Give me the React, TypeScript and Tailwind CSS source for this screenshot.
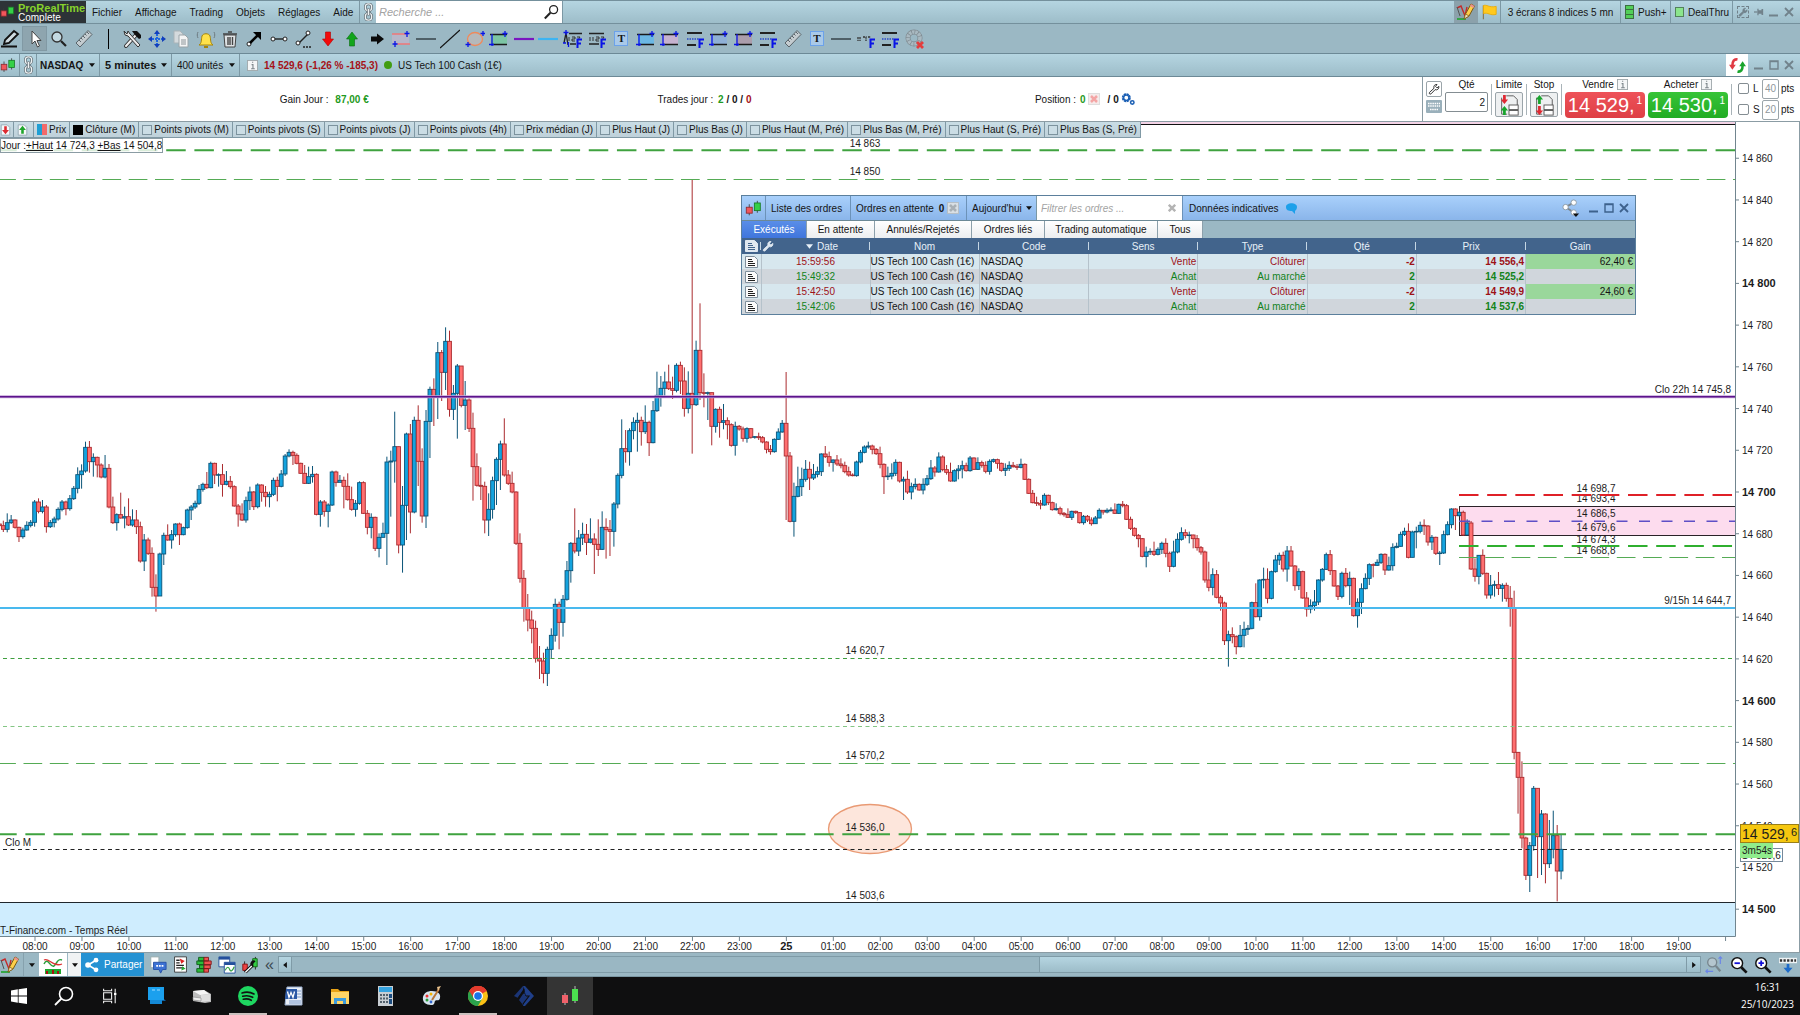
import type { ReactNode } from 'react'
import { useState } from 'react'
import clsx from 'clsx'

/* ---------- Data ---------- */

// 5 minute bars: close,high,low in thirds of a chart unit below the y=300 level
const BARS = `
677,665,690 688,662,696 668,640,697 660,645,672 682,658,686 710,680,726 690,683,716 676,664,692 667,660,682 606,600,680 634,595,640 621,600,640
680,615,698 668,660,684 657,650,682 628,622,662 606,600,634 626,602,646 596,585,632 565,558,600 524,502,580 513,493,566 442,425,518 485,423,518
472,460,530 495,470,532 531,490,535 505,465,535 621,492,625 668,590,672 644,640,692 654,578,656 650,620,685 675,595,678 660,628,680 680,630,702
783,665,788 720,702,813 760,713,765 862,742,890 888,823,935 762,758,888 706,698,795 720,673,722 704,690,746 672,670,710 704,668,735 683,680,706
630,626,686 621,615,660 610,602,627 568,555,615 553,548,575 563,516,567 490,485,565 525,488,552 524,520,560 553,492,590 544,513,556 560,528,566
618,556,620 642,612,680 660,610,663 602,590,668 576,560,630 620,573,630 555,550,625 577,553,605 590,558,620 583,575,622 541,533,588 559,530,604
522,510,562 468,462,528 457,448,472 466,452,495 490,460,493 520,488,522 550,495,552 530,500,552 523,498,548 643,520,646 606,600,680 634,600,650
615,610,682 516,512,618 547,512,560 541,525,545 559,530,625 599,520,602 628,560,632 610,600,650 548,544,614 640,544,642 682,630,703 652,640,715
745,650,753 712,700,772 700,668,705 486,470,795 483,452,650 440,335,548 735,440,760 616,558,818 402,398,720 636,372,700 361,350,640 484,316,558
648,445,668 364,330,684 268,260,474 290,235,378 158,126,357 217,150,303 124,82,270 328,92,350 280,255,360 198,192,416 316,198,322 300,243,390
385,295,396 500,338,602 556,460,560 559,502,600 660,545,700 628,580,708 542,530,656 478,472,615 432,422,570 525,355,530 550,510,555 576,515,580
730,574,735 835,700,848 925,810,965 960,882,994 985,932,1030 1075,962,1088 1083,1038,1137 1120,1058,1150 1048,1040,1158 1006,985,1075 913,896,1025 967,905,1048
898,885,1010 812,783,902 730,726,848 753,625,760 714,690,768 703,668,735 727,672,765 717,655,730 733,700,822 748,658,768 682,634,750 689,655,776
694,660,768 612,606,740 526,520,625 446,358,535 455,390,488 392,385,497 367,352,418 361,338,455 395,350,437 367,316,402 428,362,468 332,303,430
286,215,336 265,228,320 246,215,290 266,194,270 271,230,297 196,190,277 243,185,282 325,202,350 280,214,340 314,-361,461 151,122,318 278,10,300
280,220,322 278,275,360 379,278,436 328,325,398 367,320,413 362,312,388 374,352,418 436,370,440 379,365,467 387,375,392 415,380,425 386,382,428
412,384,416 410,408,416 413,398,420 426,408,430 448,424,460 455,435,464 418,415,458 396,385,420 370,360,398 468,216,660 664,456,667 589,548,710
560,500,592 538,503,588 508,480,545 534,485,570 523,492,540 515,500,532 462,460,528 470,438,474 487,455,500 480,478,515 492,465,498 497,475,505
515,485,520 525,500,530 527,520,529 486,482,530 457,450,490 441,436,460 438,425,446 448,434,463 461,444,465 493,440,505 530,490,582 528,500,540
520,490,538 487,478,528 543,485,548 538,530,600 576,512,582 560,548,598 553,535,568 570,550,572 553,535,583 536,525,558 504,480,540 516,498,530
471,457,518 509,466,514 517,495,524 543,488,545 512,508,545 507,495,538 497,482,535 512,488,515 474,468,515 508,472,510 488,472,510 496,482,503
514,484,520 484,478,524 479,476,488 490,476,506 511,488,515 505,490,528 496,484,513 500,486,503 502,492,510 493,476,505 538,490,540 580,535,582
608,570,610 610,590,618 615,600,628 586,580,617 608,584,615 629,605,632 626,610,632 640,620,646 644,636,650 652,625,654 634,632,660 638,632,642
668,636,671 649,645,674 660,645,666 671,652,677 654,648,672 631,625,655 636,630,644 631,625,640 630,622,635 640,610,642 613,611,642 617,603,622
658,612,660 685,650,690 706,682,710 716,702,742 769,714,772 756,740,802 754,745,765 763,725,768 748,742,766 730,725,762 760,715,772 799,755,816
756,722,802 718,700,760 698,682,722 706,688,715 705,695,730 716,704,745 743,705,752 756,738,764 840,752,848 862,785,874 824,805,886 892,810,895
909,886,932 1022,905,1035 1004,992,1100 1010,982,1030 1040,1006,1063 1006,975,1042 988,965,1042 985,975,1005 908,905,988 950,850,952 840,838,962 838,803,865
895,805,910 815,812,898 780,765,818 766,758,795 807,755,815 753,738,845 798,738,800 857,795,872 815,805,870 894,812,896 927,876,950 917,898,940
906,870,932 840,838,915 808,804,845 764,758,810 812,750,825 858,810,860 889,855,900 820,815,895 857,804,862 835,815,915 947,833,950 907,895,983
866,850,942 835,820,868 794,790,855 796,790,832 787,778,798 763,760,792 810,760,825 797,770,812 742,730,812 739,728,745 703,695,740 694,683,708
772,670,775 696,692,772 694,680,745 676,665,700 678,658,705 726,675,737 712,705,750 760,710,765 759,753,795 704,692,762 674,664,706 627,625,685
647,625,690 637,633,650 705,632,708 669,658,706 807,663,810 829,775,845 766,765,853 820,748,825 885,818,896 856,825,896 854,842,890 865,816,885
856,850,905 895,848,905 923,858,980 1357,872,1378 1432,1356,1541 1614,1384,1645 1726,1610,1740 1637,1626,1776 1465,1458,1652 1610,1465,1734 1542,1530,1725 1691,1540,1750
1648,1560,1704 1607,1532,1675 1713,1575,1804 1648,1605,1738
`
  .trim()
  .split(/\s+/)
  .map((bar) => bar.split(',').map(Number))

const BAR_STEP = 3.914
const barX = (i: number) => -0.6 + i * BAR_STEP
const levelY = (v: number) => 300 + v / 3
const priceY = (price: number) => 492 + (14700 - price) * 2.086

const PRICES = Array.from({ length: 19 }, (_, i) => 14860 - i * 20)
const HOURS = Array.from({ length: 37 }, (_, i) => i)

const INDICATORS = [
  'Points pivots (M)', 'Points pivots (S)', 'Points pivots (J)', 'Points pivots (4h)', 'Prix médian (J)',
  'Plus Haut (J)', 'Plus Bas (J)', 'Plus Haut (M, Pré)', 'Plus Bas (M, Pré)', 'Plus Haut (S, Pré)', 'Plus Bas (S, Pré)',
]

const ORDERS = [
  { date: '15:59:56', sens: 'Vente', type: 'Clôturer', qte: '-2', prix: '14 556,4', gain: '62,40 €' },
  { date: '15:49:32', sens: 'Achat', type: 'Au marché', qte: '2', prix: '14 525,2', gain: '' },
  { date: '15:42:50', sens: 'Vente', type: 'Clôturer', qte: '-2', prix: '14 549,9', gain: '24,60 €' },
  { date: '15:42:06', sens: 'Achat', type: 'Au marché', qte: '2', prix: '14 537,6', gain: '' },
]

const TABS = [
  { label: 'Exécutés', width: 'w-[65px]' },
  { label: 'En attente', width: 'w-[68px]' },
  { label: 'Annulés/Rejetés', width: 'w-[97px]' },
  { label: 'Ordres liés', width: 'w-[73px]' },
  { label: 'Trading automatique', width: 'w-[113px]' },
  { label: 'Tous', width: 'w-[45px]' },
]

/* ---------- Icons ---------- */

interface IconProps {
  children: ReactNode
  className?: string
  box?: string
}

function Icon({ children, className = 'h-5 w-5', box = '0 0 20 20' }: IconProps) {
  return (
    <svg viewBox={box} className={clsx('block shrink-0', className)} fill="none" aria-hidden="true">
      {children}
    </svg>
  )
}

const Caret = ({ className = '' }: { className?: string }) => (
  <Icon box="0 0 8 5" className={clsx('h-[4px] w-[6px]', className)}>
    <path d="M0 0h8L4 5z" fill="#111" />
  </Icon>
)

const Candles = ({ className = 'h-[18px] w-[18px]' }: { className?: string }) => (
  <Icon className={className}>
    <path d="M5 5v13M14.500 1v14" stroke="#3a3a3a" />
    <rect x="1.500" y="8.500" width="7" height="7" fill="#f0565c" stroke="#8f2a2e" />
    <rect x="11" y="3.500" width="7" height="9" fill="#35d048" stroke="#187a26" />
  </Icon>
)

const Chain = () => (
  <Icon box="0 0 10 20" className="h-[18px] w-[9px]">
    <rect x="1.500" y="1" width="7" height="7.500" rx="3.200" stroke="#59656b" strokeWidth="3" />
    <rect x="1.500" y="1" width="7" height="7.500" rx="3.200" stroke="#eef3f5" strokeWidth="1.500" />
    <rect x="1.500" y="11.500" width="7" height="7.500" rx="3.200" stroke="#59656b" strokeWidth="3" />
    <rect x="1.500" y="11.500" width="7" height="7.500" rx="3.200" stroke="#eef3f5" strokeWidth="1.500" />
    <rect x="3.700" y="6" width="2.600" height="8" rx="1.300" fill="#eef3f5" stroke="#59656b" strokeWidth=".8" />
  </Icon>
)

const Minimize = () => (
  <Icon box="0 0 10 10" className="h-[10px] w-[10px]"><path d="M0 8.500h9" stroke="currentColor" strokeWidth="2" /></Icon>
)
const Maximize = () => (
  <Icon box="0 0 10 10" className="h-[10px] w-[10px]"><path d="M1 1h8v8H1zM1 1.500h8" stroke="currentColor" strokeWidth="1.400" /></Icon>
)
const Close = () => (
  <Icon box="0 0 10 10" className="h-[10px] w-[10px]"><path d="M1 1l8 8M9 1L1 9" stroke="currentColor" strokeWidth="1.800" /></Icon>
)

const Wrench = ({ color = '#222', fill = '#fff', className = 'h-3 w-3' }) => (
  <Icon box="0 0 16 16" className={className}>
    <path d="M2 12.500L8 7C7 4 9 1.500 12 2L10 4.500l2 2L14.500 4.500C15 8 12 10 9.500 8.800L4 14.500C2.500 15.500 1 14 2 12.500z" fill={fill} stroke={color} strokeWidth="1.200" />
  </Icon>
)

const InfoBox = () => (
  <Icon box="0 0 12 12" className="h-[11px] w-[11px]">
    <rect x=".5" y=".5" width="11" height="11" fill="#f4f6f7" stroke="#a0a8ac" />
    <path d="M5 5h1.500v4M4.500 9.500h4M5.500 2.500h1.300" stroke="#7d868b" strokeWidth="1.200" />
  </Icon>
)

const PencilChart = () => (
  <Icon>
    <path d="M1 6l4-2 4 10 2-9" stroke="#c42a2a" strokeWidth="1.400" />
    <path d="M1 5l3 9" stroke="#555" />
    <path d="M1 17h9" stroke="#2aa53a" strokeWidth="1.800" />
    <path d="M8 17l1.500-5L15 2l3.500 2L13 14z" fill="#ffcf4a" stroke="#7a5a12" />
    <path d="M8 17l1.500-5 3.500 2z" fill="#f6dfb8" stroke="#7a5a12" strokeWidth=".7" />
    <path d="M14 4l3.500 2L18.500 4 15 2z" fill="#e98f8f" />
  </Icon>
)

const Ruler = () => (
  <Icon>
    <path d="M2 14L14 1.500l4 4L6 18z" fill="#c4ccd0" stroke="#59646a" />
    <path d="M5 11l2 2M7 9l1.500 1.500M9 7l2 2M11 5l1.500 1.500M13 3l2 2" stroke="#59646a" />
  </Icon>
)

const BlueF = () => <path d="M14.500 19v-8.500H19M14.500 14.500h3.500" stroke="#0a14e6" strokeWidth="2" />

const TextNote = () => (
  <span className="relative flex h-[15px] w-[14px] items-center justify-center border border-[#6ca2ea] bg-[#a9c9e8] font-['Liberation_Serif',serif] text-[11px] font-bold">
    T
  </span>
)

const ZoneIcon = ({ fill }: { fill: string }) => (
  <Icon>
    <path d="M2 5.500h16v10H2z" fill={fill} />
    <path d="M1 5.500h17M3 15.500h15" stroke="#1b1b1b" strokeWidth="1.500" />
    <path d="M3 5v12M0 15.500h5M16 2v6M13.500 4.500h5" stroke="#0a14e6" strokeWidth="1.300" />
  </Icon>
)

const LevelsIcon = () => (
  <Icon>
    <path d="M2 4h15M2 16h9" stroke="#222" strokeWidth="1.800" />
    <path d="M2 10h12" stroke="#2a48c8" strokeDasharray="1.500 1" strokeWidth="1.300" />
    <BlueF />
  </Icon>
)

const ChannelText = ({ first = false }) => (
  <Icon>
    <path d={first ? 'M6 4.500h13M7 15h6' : 'M2 4.500h15M2 15h10'} stroke="#222" strokeWidth="1.500" />
    <path d="M6 8v4M9 8h3v2H9v2h3M14 8h3l-2 3" stroke="#333" />
    {!first && <path d="M3 8v4" stroke="#333" />}
    {first && <path d="M1 14L3 4l2 12" stroke="#222" strokeWidth="1.300" />}
    {first && <path d="M3 1v5M.5 3.500h5M0 14h3M5.500 13v5" stroke="#0a14e6" strokeWidth="1.300" />}
    <BlueF />
  </Icon>
)

const TOOLS: { name: string; icon: ReactNode }[] = [
  { name: 'Crayon', icon: <Icon><path d="M1 17.500h16" stroke="#111" strokeWidth="2" /><path d="M4 15l1-4 9-9 4 3-9 9z" fill="#cfdbe0" stroke="#111" strokeWidth="1.800" /></Icon> },
  { name: 'Pointeur', icon: <Icon><path d="M7 2v13l3-3 2.500 6 2-1-2.500-5.500h4z" fill="#fff" stroke="#444" /></Icon> },
  { name: 'Loupe', icon: <Icon><circle cx="8" cy="8" r="5" fill="#c3d9e2" stroke="#333" strokeWidth="1.300" /><path d="M12 12l5 5" stroke="#222" strokeWidth="2.200" /></Icon> },
  { name: 'Règle', icon: <Ruler /> },
  { name: 'Séparateur', icon: <span className="h-[20px] w-px bg-black" /> },
  { name: 'Outils', icon: <Icon><path d="M4 17L14 6" stroke="#333" strokeWidth="4" strokeLinecap="round" /><path d="M4 17L14 6" stroke="#f2f2f2" strokeWidth="2" strokeLinecap="round" /><path d="M10 2h5l4 4v3l-2 1-4-4z" fill="#111" /><path d="M2 2l1 4 3 1 10 11 2-2L8 5 6 2 5 5z" fill="#e8e8e8" stroke="#333" /></Icon> },
  { name: 'Déplacer', icon: <Icon><path d="M10 1L7 5h6zM10 19l-3-4h6zM1 10l4-3v6zM19 10l-4-3v6z" fill="#123fbc" /><path d="M10 5v10M5 10h10" stroke="#1e66e0" strokeWidth="2" strokeDasharray="2 1" /></Icon> },
  { name: 'Copier', icon: <Icon><path d="M3 2h6l3 3v9H3z" fill="#d4dadd" stroke="#aab4b8" /><path d="M8 6h6l3 3v9H8z" fill="#f4f5f5" stroke="#9aa4a8" /><path d="M10 11h5M10 13h5M10 15h5" stroke="#8b9498" /></Icon> },
  { name: 'Alerte', icon: <Icon><path d="M3 16c3-2 2-5 3-9 1-3 7-3 8 0 1 4 0 7 3 9z" fill="#ffe14a" stroke="#a78408" /><path d="M8 17h4v2H8z" fill="#a78408" /><path d="M2 3C1 5 1 7 2 9M18 3c1 2 1 4 0 6" stroke="#6d7a80" /></Icon> },
  { name: 'Supprimer', icon: <Icon><path d="M4 6h12l-1 12H5z" fill="#dfe3e5" stroke="#444" /><path d="M3 5h14M8 3h4M8 8v8M10 8v8M12.500 8v8" stroke="#444" strokeWidth="1.400" /></Icon> },
  { name: 'Flèche', icon: <Icon><circle cx="4" cy="15" r="2" fill="#fff" stroke="#222" /><path d="M5 14l8-8" stroke="#000" strokeWidth="2.500" /><path d="M16 3v8l-8-8z" fill="#000" /></Icon> },
  { name: 'Segment', icon: <Icon><path d="M5 10h10" stroke="#222" strokeWidth="1.400" /><circle cx="4" cy="10" r="2" fill="#fff" stroke="#222" /><circle cx="16" cy="10" r="2" fill="#fff" stroke="#222" /></Icon> },
  { name: 'Segment prolongé', icon: <Icon><path d="M5 14L14 5" stroke="#222" strokeWidth="1.400" /><circle cx="4" cy="14" r="2" fill="#fff" stroke="#222" /><circle cx="14" cy="4" r="2" fill="#fff" stroke="#222" /><path d="M9 18h9" stroke="#222" strokeDasharray="2 1" strokeWidth="1.500" /></Icon> },
  { name: 'Flèche baissière', icon: <Icon><path d="M7.500 3h5v7h3L10 17l-5.500-7h3z" fill="#f20b0b" stroke="#b30000" strokeWidth=".6" /></Icon> },
  { name: 'Flèche haussière', icon: <Icon><path d="M7.500 17h5v-7h3L10 3l-5.500 7h3z" fill="#12a51c" stroke="#0b6a12" strokeWidth=".6" /></Icon> },
  { name: 'Flèche droite', icon: <Icon><path d="M4 7.500v5h6v3l7-5.500-7-5.500v3z" fill="#0a0a0a" /></Icon> },
  { name: 'Canal', icon: <Icon><path d="M1 5h17v10H1z" fill="#b6b7c9" /><path d="M1 5h14M6 15h13" stroke="#ef7777" strokeWidth="1.700" /><path d="M16 2v6M13.500 4.500h5M4 12v6M1.500 15h5" stroke="#0a14e6" strokeWidth="1.300" /></Icon> },
  { name: 'Ligne horizontale', icon: <Icon><path d="M0 10h20" stroke="#3b4a51" strokeWidth="1.600" /></Icon> },
  { name: 'Ligne', icon: <Icon><path d="M0 19L20 1" stroke="#111" strokeWidth="1.300" /></Icon> },
  { name: 'Ellipse', icon: <Icon><ellipse cx="10" cy="10" rx="7.500" ry="6.500" fill="#b5b9bb" stroke="#ee8a5c" strokeWidth="1.300" /><path d="M18 2v5M15.500 4.500h5M3 13v5M.5 15.500h5" stroke="#0a14e6" strokeWidth="1.300" /></Icon> },
  { name: 'Zone verte', icon: <ZoneIcon fill="#7dc5a4" /> },
  { name: 'Ligne violette', icon: <Icon><path d="M0 10h20" stroke="#7a15c0" strokeWidth="2.200" /></Icon> },
  { name: 'Ligne bleue', icon: <Icon><path d="M0 10h20" stroke="#3db4f2" strokeWidth="2.200" /></Icon> },
  { name: 'Fibonacci canal', icon: <ChannelText first /> },
  { name: 'Fibonacci', icon: <ChannelText /> },
  { name: 'Texte', icon: <TextNote /> },
  { name: 'Zone bleue', icon: <ZoneIcon fill="#6cb8e4" /> },
  { name: 'Zone rose', icon: <ZoneIcon fill="#c6b2cf" /> },
  { name: 'Niveaux', icon: <LevelsIcon /> },
  { name: 'Zone bleue 2', icon: <ZoneIcon fill="#8fb0d6" /> },
  { name: 'Zone mauve', icon: <ZoneIcon fill="#ab9eac" /> },
  { name: 'Niveaux 2', icon: <LevelsIcon /> },
  { name: 'Mesure', icon: <Ruler /> },
  { name: 'Texte 2', icon: <TextNote /> },
  { name: 'Ligne grise', icon: <Icon><path d="M0 10h20" stroke="#3b4a51" strokeWidth="1.600" /></Icon> },
  { name: 'Fibonacci 2', icon: <Icon><path d="M2 8v4M4 8v4M7 8h3v4M12 8h3" stroke="#333" strokeDasharray="2 .8" strokeWidth="1.300" /><BlueF /></Icon> },
  { name: 'Niveaux 3', icon: <LevelsIcon /> },
  { name: 'Réglage désactivé', icon: <Icon><circle cx="9" cy="9" r="6" fill="none" stroke="#7f8b91" strokeWidth="5" /><circle cx="9" cy="9" r="6" stroke="#a9b9c1" strokeWidth="3.600" strokeDasharray="2.500 .7" /><path d="M12 13l6 6M18 13l-6 6" stroke="#e43c3c" strokeWidth="2.800" /></Icon> },
]

/* ---------- Bars at the top ---------- */

const BAR_BG = 'bg-linear-to-b from-[#b5d5e1] to-[#9dbdc9]'

function MenuBar() {
  return (
    <header className={clsx('flex h-6 shrink-0 border-y border-[#74909c]', BAR_BG)}>
      <div className="flex w-[86px] items-center gap-[3px] bg-[#2d3337]">
        <Candles className="h-[18px] w-[15px]" />
        <div className="pt-px leading-[10px] text-white">
          <div className="text-[11px] font-bold text-[#86d22c]">ProRealTime</div>
          <div>Complete</div>
        </div>
      </div>
      <nav className="flex w-[274px] items-center gap-[13px] border-r border-[#7c98a4] pl-1.5">
        {['Fichier', 'Affichage', 'Trading', 'Objets', 'Réglages', 'Aide'].map((item) => (
          <button key={item}>{item}</button>
        ))}
      </nav>
      <button aria-label="Lier" className="flex w-4 items-center justify-center"><Chain /></button>
      <label className="flex w-[187px] items-center border-r border-[#7c98a4] bg-white pr-0.5">
        <input aria-label="Recherche" placeholder="Recherche ..." className="h-full min-w-0 flex-1 px-[3px] text-[11px] italic outline-none placeholder:text-[#a3a3a3]" />
        <Icon className="h-4 w-4">
          <circle cx="12" cy="7" r="5" stroke="#222" strokeWidth="1.600" />
          <path d="M8 11l-7 7" stroke="#222" strokeWidth="2.600" />
        </Icon>
      </label>
      <div className="ml-auto flex">
        <button aria-label="Dessiner" className="flex w-6 items-center justify-center bg-[#8ba1ab]"><PencilChart /></button>
        <button aria-label="Signaler" className="flex w-[23px] items-center justify-center border-r border-[#7c98a4]">
          <Icon className="h-4 w-4">
            <path d="M3 2v17" stroke="#8a7a55" strokeWidth="1.500" />
            <path d="M3 2c4-2 7 3 16 1v10c-8 2-10-3-16-1z" fill="#ffc91e" stroke="#e9a800" />
          </Icon>
        </button>
        <button className="w-[120px] border-r border-[#7c98a4]">3 écrans 8 indices 5 mn</button>
        <button className="flex w-[50px] items-center gap-1 border-r border-[#7c98a4] pl-1">
          <span className="flex h-[14px] w-[9px] shrink-0 flex-col divide-y divide-[#3b6f40] border border-[#3b6f40] bg-[#52cf58]">
            <span className="flex-1" /><span className="flex-1" /><span className="flex-1" />
          </span>
          Push+
        </button>
        <button className="flex w-[62px] items-center gap-1 border-r border-[#7c98a4] pl-1">
          <span className="h-[10px] w-[9px] shrink-0 border border-[#53825b] bg-[#8be58c]" />
          DealThru
        </button>
        <div className="flex w-[67px] items-center justify-between pr-1.5 pl-1 text-[#71828b]">
          <span className="border border-dashed border-current"><Wrench color="#71828b" fill="#71828b" className="h-[10px] w-[10px]" /></span>
          <Icon box="0 0 12 10" className="h-[10px] w-[10px]">
            <path d="M0 5h4" stroke="currentColor" strokeWidth="1.500" />
            <path d="M4 1h1.500v2H9V1.500h2v7H9V7H5.500v2H4z" fill="currentColor" />
          </Icon>
          <Minimize />
          <Close />
        </div>
      </div>
    </header>
  )
}

function DrawingBar() {
  return (
    <div className="h-[29px] shrink-0 bg-[#9bb8c4]">
      <div className="-ml-0.5 grid h-full w-[929px] grid-cols-[repeat(38,minmax(0,1fr))]">
        {TOOLS.map((tool, i) => (
          <button
            key={tool.name}
            aria-label={tool.name}
            className={clsx('flex items-center justify-center', i === 1 && 'my-0.5 border border-[#8199a4] bg-[#8ea5af]')}
          >
            {tool.icon}
          </button>
        ))}
      </div>
    </div>
  )
}

interface DropdownProps {
  label: string
  value: string
  className?: string
}

function Dropdown({ label, value, className }: DropdownProps) {
  return (
    <label className={clsx('relative flex items-center border-r border-[#7c98a4]', className)}>
      <select aria-label={label} className="h-full w-full appearance-none bg-transparent pl-[3px] outline-none">
        <option>{value}</option>
      </select>
      <Caret className="pointer-events-none absolute right-1" />
    </label>
  )
}

function ChartTitleBar() {
  return (
    <div className={clsx('flex h-6 shrink-0 items-stretch border-y border-[#6c8996]', BAR_BG)}>
      <div className="flex w-5 items-center border-r border-[#7c98a4]"><Candles className="h-[17px] w-[16px]" /></div>
      <div className="flex w-[17px] items-center justify-center border-r border-[#7c98a4]"><Chain /></div>
      <Dropdown label="Valeur" value="NASDAQ" className="w-[63px] font-bold" />
      <Dropdown label="Unité de temps" value="5 minutes" className="w-[72px] pl-0.5 text-[11px] font-bold" />
      <Dropdown label="Historique" value="400 unités" className="w-[68px] pl-0.5" />
      <div className="flex items-center gap-[6px] pl-[7px]">
        <InfoBox />
        <span className="font-bold text-[#a51218]">14 529,6 (-1,26 % -185,3)</span>
        <span className="h-2 w-2 rounded-full bg-[#419d12]" />
        <span>US Tech 100 Cash (1€)</span>
      </div>
      <div className="ml-auto flex">
        <button aria-label="Actualiser" className="flex w-[22px] items-center justify-center bg-white">
          <Icon className="h-[17px] w-[17px]">
            <path d="M10 3C6 2 4 5 4 10" stroke="#e03a44" strokeWidth="3" />
            <path d="M0 9h8l-4 6z" fill="#e03a44" />
            <path d="M10 17c4 1 6-2 6-7" stroke="#18a52c" strokeWidth="3" />
            <path d="M12 11h8l-4-6z" fill="#18a52c" />
          </Icon>
        </button>
        <div className="flex w-[52px] items-center justify-between pr-1.5 pl-1.5 text-[#71828b]">
          <Minimize /><Maximize /><Close />
        </div>
      </div>
    </div>
  )
}

/* ---------- Trading panel ---------- */

const OrderSheet = ({ flip = false }) => (
  <Icon box="0 0 24 24" className="h-[22px] w-[22px]">
    <path d="M9 2h8l4 4v6M10 22H4V4" stroke="#555" fill="none" />
    <rect x="12" y="12" width="10" height="5" fill="#fff" stroke="#555" />
    <rect x="12" y="18" width="10" height="5" fill="#fff" stroke="#555" />
    <path d="M5.500 1h3v5H11l-4 5-4-5h2.500z" fill={flip ? '#18a52c' : '#df2932'} transform={flip ? 'rotate(180 7 6)' : undefined} />
    <path d="M5.500 23h3v-5H11l-4-5-4 5h2.500z" fill={flip ? '#df2932' : '#18a52c'} transform={flip ? 'rotate(180 7 18)' : undefined} />
  </Icon>
)

const Divider = () => <span className="h-[31px] w-px self-center bg-[#a9b3b8]" />

function PriceButton({ label, price, className }: { label: string; price: string; className: string }) {
  return (
    <div className="w-20">
      <div className="flex h-[15px] items-center justify-center gap-[3px]">{label}<InfoBox /></div>
      <button className={clsx('flex h-[26px] w-full items-start justify-center gap-0.5 rounded-sm text-[20px] leading-[26px] text-white', className)}>
        {price}<sup className="top-0 text-[10px] leading-[18px]">1</sup>
      </button>
    </div>
  )
}

function PointsRow({ label, value }: { label: string; value: string }) {
  return (
    <div className="flex h-[21px] items-center">
      <label className="flex w-[24px] items-center gap-[4px]">
        <input type="checkbox" className="h-[11px] w-[11px] shrink-0 appearance-none rounded-xs border border-[#848d92] bg-white" />
        {label}
      </label>
      <input aria-label={`Points ${label}`} defaultValue={value} className="h-5 w-[17px] rounded-xs border border-[#9ba5aa] text-center text-[#8f979b]" />
      <span className="pl-0.5">pts</span>
    </div>
  )
}

function TradingPanel() {
  return (
    <section className="flex h-[45px] shrink-0 border-b border-[#8b9ca4] bg-white">
      <div className="grid flex-1 grid-cols-3 items-center pr-[147px] pl-[134px] text-center">
        <div>Gain Jour : <b className="pl-1 text-[#1f9a22]">87,00 €</b></div>
        <div>
          Trades jour : <b className="pl-0.5"><span className="text-[#1f9a22]">2</span> / 0 / <span className="text-[#a51218]">0</span></b>
        </div>
        <div className="flex items-center justify-center gap-0.5">
          Position : <b className="pl-0.5 text-[#1f9a22]">0</b>
          <Icon box="0 0 12 12" className="h-3 w-3">
            <rect x=".5" y=".5" width="11" height="11" fill="#f6eaea" stroke="#dedede" />
            <path d="M3 3l6 6M9 3L3 9" stroke="#f4a5a5" strokeWidth="2.500" />
          </Icon>
          <b className="pl-1.5">/ 0</b>
          <Icon box="0 0 16 14" className="h-3 w-[14px]">
            <circle cx="6" cy="5.500" r="4" stroke="#1b5fb4" strokeWidth="2.500" strokeDasharray="2.500 .6" />
            <circle cx="6" cy="5.500" r="3" stroke="#1b5fb4" strokeWidth="1.500" />
            <circle cx="13" cy="11" r="2" stroke="#1b5fb4" strokeWidth="1.800" />
          </Icon>
        </div>
      </div>
      <div className="flex gap-[3px] border-l border-[#8b9ca4] pl-[3px]">
        <div className="flex flex-col gap-[3px] pt-1">
          <button aria-label="Paramètres" className="flex h-4 w-4 items-center justify-center rounded-xs border border-[#9ba5aa]"><Wrench /></button>
          <button aria-label="Clavier">
            <Icon box="0 0 16 13" className="h-[13px] w-4">
              <rect width="16" height="13" rx="1" fill="#9ab0bb" />
              <path d="M2 3.500h12M2 6h12M4 9.500h8" stroke="#fff" strokeWidth="1.500" strokeDasharray="1.500 .7" />
            </Icon>
          </button>
        </div>
        <label className="w-[43px] text-center">
          <span className="flex h-[15px] items-center justify-center">Qté</span>
          <input defaultValue="2" className="h-5 w-full rounded-xs border border-[#848d92] pr-0.5 text-right" />
        </label>
        <Divider />
        <div className="w-7">
          <div className="flex h-[15px] items-center justify-center">Limite</div>
          <button aria-label="Ordre limite" className="flex h-[25px] w-full items-center justify-center rounded-xs border border-[#9ba5aa] bg-[#eef0f1]"><OrderSheet /></button>
        </div>
        <Divider />
        <div className="w-7">
          <div className="flex h-[15px] items-center justify-center">Stop</div>
          <button aria-label="Ordre stop" className="flex h-[25px] w-full items-center justify-center rounded-xs border border-[#9ba5aa] bg-[#eef0f1]"><OrderSheet flip /></button>
        </div>
        <Divider />
        <PriceButton label="Vendre" price="14 529," className="bg-linear-to-b from-[#ee5259] to-[#de3f45]" />
        <PriceButton label="Acheter" price="14 530," className="bg-linear-to-b from-[#37c437] to-[#21ac24]" />
        <Divider />
        <div className="flex w-[65px] flex-col pt-px pl-[3px]">
          <PointsRow label="L" value="40" />
          <PointsRow label="S" value="20" />
        </div>
      </div>
    </section>
  )
}

/* ---------- Chart ---------- */

function CandleSeries() {
  return (
    <g>
      {BARS.map(([close, high, low], i) => {
        const open = i === 0 ? 672 : BARS[i - 1][0]
        const up = close < open
        const stroke = up ? '#0b5478' : '#aa2b2f'
        return (
          <g key={i} stroke={stroke}>
            <path d={`M${barX(i)} ${levelY(high)}V${levelY(low)}`} />
            <rect
              x={barX(i) - 1.9}
              y={levelY(Math.min(open, close))}
              width={3.8}
              height={Math.max(Math.abs(close - open) / 3, 0.6)}
              fill={up ? '#14a3de' : '#ff6f70'}
              strokeWidth={0.9}
            />
          </g>
        )
      })}
    </g>
  )
}

const MID_LABELS: [string, number][] = [
  ['14 863', 147], ['14 850', 175], ['14 620,7', 654], ['14 588,3', 722], ['14 570,2', 759], ['14 536,0', 831], ['14 503,6', 899],
]
const ZONE_LABELS: [string, number][] = [
  ['14 698,7', 492], ['14 693,4', 502], ['14 686,5', 517], ['14 679,6', 531], ['14 674,3', 543], ['14 668,8', 554],
]

function PriceChart() {
  return (
    <svg viewBox="0 122 1800 831" className="block h-full w-full" fontSize="10" fill="#1c1c1c" role="img" aria-label="NASDAQ 5 minutes">
      <path d="M0 122h1735v2H0z" fill="#f3d3e6" />
      <path d="M0 124.500H1735" stroke="#111" />

      {/* Lower band */}
      <path d="M0 903h1735v33H0z" fill="#cfedfe" />
      <path d="M0 902.500H1735" stroke="#20272c" strokeWidth="1.200" />

      {/* Opening range zone */}
      <rect x="1459.500" y="506.500" width="276" height="29" fill="#fddcee" stroke="#2a2228" />
      <ellipse cx="870" cy="829" rx="41.500" ry="24.500" fill="#fde6dc" stroke="#e99a74" strokeWidth="1.300" />

      <CandleSeries />

      {ZONE_LABELS.map(([text, y]) => (
        <text key={text} x="1596" y={y} textAnchor="middle">{text}</text>
      ))}

      {/* Pivot levels */}
      <g fill="none">
        <g stroke="#3fa23f" strokeWidth="2" strokeDasharray="19.500 8.670">
          <path d="M-2.800 150.300H1735M-2.800 834.300H1735" />
          <path d="M1459 546H1735" stroke="#2faf2f" />
          <path d="M1459 495H1735" stroke="#df2027" />
        </g>
        <g stroke="#55ab55" strokeWidth="1.200" strokeDasharray="18.700 7.600">
          <path d="M-2.800 179.500H1735M-2.800 763.500H1735M1459 557.500H1735" />
        </g>
        <path d="M3 658.500H1735" stroke="#3f9f3f" strokeDasharray="4 3.500" />
        <path d="M3 726.500H1735" stroke="#84c684" strokeDasharray="4 3.500" />
        <path d="M3 849.500H1735" stroke="#222" strokeWidth="1.200" strokeDasharray="4 3.500" />
        <path d="M1459 521.300H1735" stroke="#5f4fc6" strokeWidth="1.600" strokeDasharray="11 11.500" />
        <path d="M0 396.800H1735" stroke="#c5a3d8" strokeWidth="3" />
        <path d="M0 396.800H1735" stroke="#5c148c" strokeWidth="1.600" />
        <path d="M0 608H1735" stroke="#49b9ee" strokeWidth="2" />
      </g>

      {MID_LABELS.map(([text, y]) => (
        <text key={text} x="865" y={y} textAnchor="middle">{text}</text>
      ))}
      <text x="1731" y="393" textAnchor="end">Clo 22h 14 745,8</text>
      <text x="1731" y="604" textAnchor="end">9/15h 14 644,7</text>
      <text x="5" y="846">Clo M</text>
      <text x="0" y="934">T-Finance.com - Temps Réel</text>

      {/* Axes */}
      <path d="M1735.500 122V936.500H0" fill="none" stroke="#71858f" />
      <path d="M0 952.500H1800M1799.500 122V953" fill="none" stroke="#8b9ca4" />
      {PRICES.map((price) => {
        const strong = price % 100 === 0
        return (
          <g key={price}>
            <path d={`M1735 ${priceY(price)}h4`} stroke="#71858f" />
            <text x="1742" y={priceY(price) + 4} fontSize={strong ? 11 : 10} fontWeight={strong ? 700 : 400}>
              {`14 ${price - 14000}`}
            </text>
          </g>
        )
      })}
      {HOURS.map((h) => {
        const x = 35 + h * 46.96
        const hour = (h + 8) % 24
        return (
          <g key={h}>
            <path d={`M${x} 937v4`} stroke="#71858f" />
            {h < 36 && (
              <text x={x} y="950" textAnchor="middle" fontWeight={hour === 0 ? 700 : 400} fontSize={hour === 0 ? 11 : 10}>
                {hour === 0 ? '25' : `${String(hour).padStart(2, '0')}:00`}
              </text>
            )}
          </g>
        )
      })}

      {/* Last price tags */}
      <rect x="1740.500" y="848.500" width="42" height="13" fill="#fff" stroke="#76899a" />
      <text x="1742" y="859">14 529,6</text>
      <rect x="1740" y="843" width="33" height="15" fill="#90ec8c" />
      <text x="1742" y="854">3m54s</text>
      <rect x="1740.500" y="824.500" width="58" height="18" fill="#f5c710" stroke="#9a7f18" />
      <text x="1742" y="839" fontSize="14">14 529,</text>
      <text x="1791" y="836" fontSize="11">6</text>
    </svg>
  )
}

const SheetArrow = ({ up = false }) => (
  <Icon box="0 0 12 14" className="h-3 w-[11px]">
    <path d="M1 1h7l3 3v9H1z" fill="#f6f8f9" stroke="#8fa5b0" />
    <path d="M4.500 2.500h3v4.500H10L6 12 2 7h2.500z" fill={up ? '#1fa52b' : '#dd2b30'} transform={up ? 'rotate(180 6 7)' : undefined} />
  </Icon>
)

function IndicatorBar() {
  const cell = 'flex h-full items-center gap-[2px] border-r border-[#8099a5] px-[3px] whitespace-nowrap'
  return (
    <div className="absolute top-0 left-0 flex h-4 border-b border-[#8099a5] bg-linear-to-b from-[#c9dde5] to-[#bfd1da]">
      <button aria-label="Réduire" className={clsx(cell, 'w-[14px] pl-0')}><SheetArrow /></button>
      <button aria-label="Agrandir" className={clsx(cell, 'w-5')}><SheetArrow up /></button>
      <button className={cell}>
        <span className="flex h-[11px] w-[10px] shrink-0"><span className="flex-1 bg-[#1f9fd4]" /><span className="flex-1 bg-[#f36a6a]" /></span>
        Prix
      </button>
      <button className={cell}><span className="h-[10px] w-[10px] shrink-0 bg-black" />Clôture (M)</button>
      {INDICATORS.map((name) => (
        <label key={name} className={cell}>
          <input type="checkbox" className="h-[10px] w-[10px] shrink-0 appearance-none border border-[#7d939e] bg-[#cbdde5]" />
          {name}
        </label>
      ))}
    </div>
  )
}

/* ---------- Orders window ---------- */

const Sheet = ({ light = false }) => (
  <Icon box="0 0 13 12" className="h-3 w-[13px]">
    <path d="M.5 .5h9l3 3v8H.5z" fill={light ? '#dfe8f0' : '#fbfbfb'} stroke={light ? '#dfe8f0' : '#7f8f9c'} />
    <path d="M3 3.500h4M3 5.500h5M3 7.500h7M3 9.500h7" stroke={light ? '#42648c' : '#222'} />
  </Icon>
)

function OrdersWindow() {
  const [tab, setTab] = useState('Exécutés')
  const cell = 'border-r border-[#b5c2cb] px-px'
  const head = 'relative font-normal text-[#e8f1f8]'
  const headMark = 'absolute top-1 right-0 h-2 w-px bg-[#c5d6e4]'

  return (
    <section className="absolute top-[73px] right-[164px] w-[895px] border border-[#5b7f9c] bg-[#9bb8c4]">
      <div className="flex h-6 bg-linear-to-b from-[#a9d0fb] to-[#8ab5ea]">
        <div className="flex w-6 items-center justify-center border-r border-[#6c92b8]"><Candles className="h-[17px] w-[17px]" /></div>
        <div className="flex w-[85px] items-center border-r border-[#6c92b8] pl-[5px]">Liste des ordres</div>
        <div className="flex w-[116px] items-center gap-[3px] border-r border-[#6c92b8] pl-[5px]">
          Ordres en attente <b className="pl-0.5">0</b>
          <Icon box="0 0 12 12" className="h-3 w-3">
            <rect x=".5" y=".5" width="11" height="11" fill="#d9dfe4" stroke="#b5bec6" />
            <path d="M3 3l6 6M9 3L3 9" stroke="#a9b0b5" strokeWidth="2.500" />
          </Icon>
        </div>
        <Dropdown label="Période" value="Aujourd'hui" className="w-[70px] pl-0.5" />
        <label className="flex w-[146px] items-center border-r border-[#6c92b8] bg-white pr-1.5">
          <input aria-label="Filtrer les ordres" placeholder="Filtrer les ordres ..." className="h-full min-w-0 flex-1 pl-1 italic outline-none placeholder:text-[#a3a3a3]" />
          <Icon box="0 0 10 10" className="h-2 w-2"><path d="M1 1l8 8M9 1L1 9" stroke="#b4b4b4" strokeWidth="3" /></Icon>
        </label>
        <div className="flex items-center gap-1.5 pl-1.5">
          Données indicatives
          <Icon box="0 0 12 12" className="h-3 w-3"><path d="M1 5c0-5 11-5 11 0 0 2-1 3-2 4v3L7 9C3 9 1 8 1 5z" fill="#1da0ea" /></Icon>
        </div>
        <div className="ml-auto flex items-center gap-[5px] pr-1.5 text-[#3d618c]">
          <Icon className="mr-1 h-[18px] w-[18px]">
            <path d="M13 4L4 9l9 6" stroke="#7c8790" strokeWidth="2" />
            <circle cx="13" cy="4" r="3" fill="#fff" stroke="#8b98a3" />
            <circle cx="4" cy="9" r="3" fill="#fff" stroke="#8b98a3" />
            <circle cx="13" cy="15" r="3" fill="#fff" stroke="#8b98a3" />
            <path d="M12 16h7l-3.500 4z" fill="#111" />
          </Icon>
          <Minimize /><Maximize /><Close />
        </div>
      </div>
      <div className="flex h-[18px] border-t border-[#6c8996]">
        {TABS.map(({ label, width }) => (
          <button
            key={label}
            onClick={() => setTab(label)}
            className={clsx(
              'border-r border-[#8ca0ab] text-center whitespace-nowrap',
              width,
              tab === label ? 'bg-linear-to-b from-[#5a8ee8] to-[#3f75dc] text-white' : 'bg-linear-to-b from-white to-[#eceef0]',
            )}
          >
            {label}
          </button>
        ))}
      </div>
      <table className="w-full table-fixed border-collapse leading-[15px]">
        <colgroup>
          <col className="w-[19px]" />
          <col className="w-[109px]" />
          {Array.from({ length: 7 }, (_, i) => <col key={i} />)}
        </colgroup>
        <thead className="bg-[#42648c]">
          <tr className="h-4">
            <th className={clsx(head, 'pl-[3px]')}><Sheet light /><i className={headMark} /></th>
            <th className={head}>
              <span className="flex items-center">
                <Wrench color="#dfe8f0" fill="#dfe8f0" className="ml-px h-3 w-3" />
                <Icon box="0 0 8 5" className="ml-8 h-[5px] w-[7px]"><path d="M0 0h8L4 5z" fill="#e8f1f8" /></Icon>
                <span className="pl-1">Date</span>
              </span>
              <i className={headMark} />
            </th>
            {['Nom', 'Code', 'Sens', 'Type', 'Qté', 'Prix', 'Gain'].map((name) => (
              <th key={name} className={head}>{name}{name !== 'Gain' && <i className={headMark} />}</th>
            ))}
          </tr>
        </thead>
        <tbody>
          {ORDERS.map((order, i) => (
            <tr
              key={order.date}
              className={clsx('h-[15px]', i % 2 === 0 ? 'bg-[#d7e7ee] text-[#9d1218]' : 'bg-[#d0d6dc] text-[#12831a]')}
            >
              <td className="border-r border-[#b5c2cb] pl-[3px]"><Sheet /></td>
              <td className="border-r border-[#b5c2cb] text-center">{order.date}</td>
              <td className="whitespace-nowrap border-r border-[#b5c2cb] text-[#151515]">US Tech 100 Cash (1€)</td>
              <td className={clsx(cell, 'text-[#151515]')}>NASDAQ</td>
              <td className={clsx(cell, 'text-right')}>{order.sens}</td>
              <td className={clsx(cell, 'text-right')}>{order.type}</td>
              <td className={clsx(cell, 'text-right font-bold')}>{order.qte}</td>
              <td className={clsx(cell, 'text-right font-bold')}>{order.prix}</td>
              <td className={clsx('pr-0.5 text-right text-[#151515]', order.gain && 'bg-[#9ad79b]')}>{order.gain}</td>
            </tr>
          ))}
        </tbody>
      </table>
    </section>
  )
}

/* ---------- Bottom bars ---------- */

function BottomBar() {
  const btn = 'flex w-[23px] items-center justify-center'
  return (
    <div className="flex h-6 shrink-0 border-b border-[#7b97a3] bg-[#9bb8c4]">
      <button aria-label="Dessin" className="flex w-6 items-center border-r border-[#86a1ad]"><PencilChart /></button>
      <button aria-label="Options de dessin" className="flex w-[15px] items-center justify-center"><Caret /></button>
      <button aria-label="Indicateurs" className="flex w-7 items-center justify-center bg-white">
        <Icon>
          <path d="M1 9c4-8 6 4 10 2 3-2 3-8 8-6" stroke="#2a9d3a" strokeWidth="1.500" />
          <path d="M1 5c5-3 9 8 18 4" stroke="#d33" strokeWidth="1.300" />
          <path d="M2 14h16v5H2z" fill="#1fa830" />
          <path d="M3 16h2v3H3zM9 15h2v4H9zM14 16h2v3h-2z" fill="#a11" />
        </Icon>
      </button>
      <button aria-label="Options des indicateurs" className="ml-px flex w-[13px] items-center justify-center bg-[#f0f3f4]"><Caret /></button>
      <button className="flex w-[63px] items-center gap-1 bg-[#2592d3] pl-[3px] text-white">
        <Icon className="h-4 w-4">
          <path d="M15 4L5 10l10 6" stroke="#fff" strokeWidth="2" />
          <circle cx="15" cy="4" r="3" fill="#fff" /><circle cx="5" cy="10" r="3.500" fill="#fff" /><circle cx="15" cy="16" r="3" fill="#fff" />
        </Icon>
        Partager
      </button>
      <button aria-label="Discussion" className={clsx(btn, 'ml-0.5')}>
        <Icon className="h-[18px] w-[18px]">
          <path d="M2 1h9v12H2z" fill="#fff" stroke="#9aa" />
          <path d="M5 7h14v8h-4l-2 4-2-4H5z" fill="#3c71d4" stroke="#2650a6" />
          <path d="M8 11h8" stroke="#fff" strokeWidth="2" strokeDasharray="2 1" />
        </Icon>
      </button>
      <button aria-label="Ordres" className={btn}>
        <Icon className="h-[17px] w-[17px]">
          <path d="M3 1h14v18H3z" fill="#fff" stroke="#333" />
          <path d="M5 5h4M5 8h4M5 11h9M5 14h9" stroke="#222" strokeWidth="1.500" />
          <path d="M9 3l6 3-4 3z" fill="#d22" /><path d="M12 12l4 3-5 2z" fill="#2a3" />
        </Icon>
      </button>
      <button aria-label="Carnet" className={btn}>
        <Icon className="h-[18px] w-[18px]">
          <path d="M4 1.500h6v4H4zM2 5.500h8v4H2zM5 10h5v4H5zM2 14h8v4H2z" fill="#2bbd3a" stroke="#125a1c" />
          <path d="M10 1.500h5v4h-5zM10 5.500h8v4h-8zM10 10h7v4h-7zM10 14h5v4h-5z" fill="#f05050" stroke="#7c1a1a" />
        </Icon>
      </button>
      <button aria-label="Fenêtres" className={btn}>
        <Icon className="h-[18px] w-[18px]">
          <path d="M1 1h12v11H1z" fill="#fff" stroke="#234f9c" /><path d="M1 2.500h12" stroke="#234f9c" strokeWidth="3" />
          <path d="M7 7h12v12H7z" fill="#fff" stroke="#234f9c" /><path d="M7 8.500h12" stroke="#234f9c" strokeWidth="3" />
          <path d="M8 16c2-5 4-4 5-1s3 2 5-3" stroke="#2a9d3a" strokeWidth="1.300" />
        </Icon>
      </button>
      <button aria-label="ProOrder" className={btn}>
        <Icon className="h-[18px] w-[18px]">
          <path d="M4 6v12M16 1v14" stroke="#222" /><path d="M2 9h5v7H2z" fill="#e44" stroke="#811" /><path d="M13 3h5v9h-5z" fill="#3c4" stroke="#161" />
          <path d="M5 18l7-7c-1-4 2-5 3-4" stroke="#111" strokeWidth="3.500" /><path d="M5 18l7-7" stroke="#fff" strokeWidth="1.500" />
        </Icon>
      </button>
      <button aria-label="Replier" className="w-[17px] text-base leading-5 text-[#3b4a51]">«</button>
      <div className="my-[3px] flex flex-1 border border-[#7f9ba7]">
        <button aria-label="Défiler à gauche" className={clsx('flex w-[13px] items-center justify-center border-r border-[#7f9ba7]', BAR_BG)}>
          <Caret className="rotate-90" />
        </button>
        <div className="flex-[748] bg-[#9ab7c3]" />
        <div className={clsx('flex-[647] border-l border-[#7f9ba7]', BAR_BG)} />
        <button aria-label="Défiler à droite" className={clsx('flex w-[14px] items-center justify-center border-l border-[#7f9ba7]', BAR_BG)}>
          <Caret className="-rotate-90" />
        </button>
      </div>
      <div className="flex w-[99px] items-center justify-between pr-[3px] pl-1">
        <Icon className="h-[18px] w-[18px]">
          <circle cx="8" cy="7" r="5" fill="#b4c6ce" stroke="#77858c" strokeWidth="1.500" /><path d="M12 11l5 6" stroke="#77858c" strokeWidth="2.500" />
          <path d="M1 17h8M17 1v8M3 15l-2 2 2 2M15 3l2-2 2 2" stroke="#6b85e8" strokeWidth="1.300" />
        </Icon>
        {['M5 8h6', 'M5 8h6M8 5v6'].map((sign) => (
          <Icon key={sign} className="h-[18px] w-[18px]">
            <circle cx="8" cy="8" r="6" fill="#fff" stroke="#111" strokeWidth="1.600" /><path d="M12.500 12.500l6 6" stroke="#111" strokeWidth="3" />
            <path d={sign} stroke="#1111d8" strokeWidth="2" />
          </Icon>
        ))}
        <Icon className="h-[18px] w-[18px]">
          <path d="M0 2h20v6H0z" fill="#eef3f5" /><path d="M1 5h18" stroke="#333" strokeWidth="3" strokeDasharray="2.500 1.500" />
          <path d="M8.500 9h3v4H15l-5 6-5-6h3.500z" fill="#1d6bc9" />
        </Icon>
      </div>
    </div>
  )
}

const APPS: { name: string; icon: ReactNode; open?: boolean }[] = [
  { name: 'Rechercher', icon: <Icon><circle cx="12" cy="8" r="6.500" stroke="#fff" strokeWidth="1.600" /><path d="M7.500 12.500L1 19" stroke="#fff" strokeWidth="1.800" /></Icon> },
  { name: 'Vue des tâches', icon: <Icon className="h-[16px] w-[16px]"><path d="M2 6h10v8H2zM2 1v2.500h10V1M2 19v-2.500h10V19M16.500 1v5M16.500 9v10" stroke="#eee" strokeWidth="1.400" /><path d="M15 6h3v3h-3z" fill="#fff" /></Icon> },
  { name: 'Bureau', icon: <Icon><path d="M0 13h4v5h12v-3h4l-2-2H2z" fill="#0c5f9e" /><path d="M2 1h16v13H2z" fill="#1ba0ee" /><path d="M4 14h12v4H4z" fill="#1489d6" /><path d="M6 4h3M11 4h3" stroke="#9fdcff" /></Icon> },
  { name: 'Imprimante', icon: <Icon><path d="M1 5l11-1 7 4v8l-6 1-12-2z" fill="#bdbdbd" /><path d="M1 5l11-1 5 4-9 1z" fill="#f5f5f5" /><path d="M9 9l9-1v7l-9 1z" fill="#dedede" /><path d="M1 11l8 1v3l-8-1z" fill="#efefef" stroke="#888" strokeWidth=".6" /></Icon> },
  { name: 'Spotify', open: true, icon: <Icon><circle cx="10" cy="10" r="10" fill="#1ed760" /><path d="M4 7c4-1.300 8.500-.9 12 1M4.700 10.300c3.300-1 7-.6 10 1M5.300 13.300c3-.8 5.500-.4 8 1" stroke="#111" strokeWidth="1.600" strokeLinecap="round" /></Icon> },
  { name: 'Word', icon: <Icon><path d="M3 1h15v18H1z" fill="#e9eef6" stroke="#9db1d0" /><path d="M13 5h4M13 8h4M13 11h4M5 15h12M5 17h12" stroke="#7c9bcb" /><path d="M2 3h11v10H1z" fill="#2b58a5" /><path d="M3.500 5.500l1.500 6 2-5 2 5 1.500-6" stroke="#fff" strokeWidth="1.300" /></Icon> },
  { name: 'Explorateur', icon: <Icon><path d="M1 3h7l2 2h9v13H1z" fill="#e8a317" /><path d="M1 6h18v12H1z" fill="#ffd566" /><path d="M4 18v-6h12v6h-3v-3H7v3z" fill="#3c9bdc" /></Icon> },
  { name: 'Calculatrice', icon: <Icon><path d="M2 0h15v20H2z" fill="#c8ced3" /><path d="M3 1h13v5H3z" fill="#35a3e0" /><path d="M4 9h8M4 12.500h8M4 16h8" stroke="#52606b" strokeWidth="2" strokeDasharray="2 1" /><path d="M13 8h3v4h-3zM13 13h3v5h-3z" fill="#1b4c80" /></Icon> },
  { name: 'Paint', icon: <Icon><path d="M10 5c6 0 9 3 8 7s-4 1-5 3 0 4-4 4c-5 0-9-3-8-8 1-4 4-6 9-6z" fill="#d7e4ee" /><circle cx="5" cy="10" r="1.500" fill="#e33" /><circle cx="9" cy="8" r="1.500" fill="#f4b400" /><circle cx="5" cy="14" r="1.500" fill="#2a9d3a" /><circle cx="9" cy="16" r="1.400" fill="#36c" /><path d="M10 14l7-11" stroke="#b5763a" strokeWidth="2" /><path d="M16 5l3-5-4 1z" fill="#e9c28c" /></Icon> },
  { name: 'Chrome', open: true, icon: <Icon><circle cx="10" cy="10" r="10" fill="#fbc116" /><path d="M10 10L1.300 5A10 10 0 0118.700 5z" fill="#e33b2e" /><path d="M1.300 5A10 10 0 0010 20l4.300-7.500L10 10z" fill="#2ba24c" /><path d="M10 5h8.700A10 10 0 001.300 5l4.400 7z" fill="#e33b2e" /><circle cx="10" cy="10" r="5" fill="#fff" /><circle cx="10" cy="10" r="3.800" fill="#1a73e8" /></Icon> },
  { name: 'Exodus', icon: <Icon><path d="M9 0h2l9 10-9 10H9l3-10z" fill="#1f3f8a" /><path d="M0 10L9 0v4L4 12z" fill="#1b3576" /><path d="M5 14l6-9v5l3-1-5 10z" fill="#1b3576" /><path d="M4 12l6-8v4M9 18l6-8h-3" stroke="#0f0f10" strokeWidth="1.200" /></Icon> },
]

function Taskbar() {
  return (
    <footer className="flex h-[38px] shrink-0 bg-[#0f0f10]">
      <button aria-label="Démarrer" className="flex w-[41px] items-center justify-center pr-1">
        <Icon className="h-[16px] w-[16px]"><path d="M0 3l8.500-1.300V9.500H0zM9.500 1.500L20 0v9.500H9.500zM0 10.500h8.500v7.800L0 17zM9.500 10.500H20V20L9.500 18.500z" fill="#fff" /></Icon>
      </button>
      {APPS.map((app) => (
        <button key={app.name} aria-label={app.name} className="relative flex w-[46px] items-center justify-center">
          {app.icon}
          {app.open && <span className="absolute inset-x-1 bottom-0 h-0.5 bg-[#c9c0be]" />}
        </button>
      ))}
      <button aria-label="ProRealTime" className="flex w-[46px] items-center justify-center bg-[#343434]">
        <Icon>
          <path d="M5 7v12M15 0v17" stroke="#bbb" /><path d="M2 9h6v8H2z" fill="#f0616a" /><path d="M12 3h6v12h-6z" fill="#4be04f" />
        </Icon>
      </button>
      <div className="ml-auto flex flex-col justify-center pr-[6px] text-center font-['Open_Sans',sans-serif] leading-[17px] text-white">
        <time>16:31</time>
        <time>25/10/2023</time>
      </div>
    </footer>
  )
}

export default function App() {
  return (
    <div className="flex h-screen flex-col overflow-hidden bg-white font-['Liberation_Sans',Arial,sans-serif] text-[10px] text-[#151515]">
      <MenuBar />
      <DrawingBar />
      <ChartTitleBar />
      <TradingPanel />
      <main className="relative min-h-0 flex-1">
        <PriceChart />
        <IndicatorBar />
        <div className="absolute top-4 left-0 border border-[#8b9ca4] bg-white/80 leading-[13px]">
          Jour :<u>+Haut</u> 14 724,3 <u>+Bas</u> 14 504,8
        </div>
        <OrdersWindow />
      </main>
      <BottomBar />
      <Taskbar />
    </div>
  )
}
